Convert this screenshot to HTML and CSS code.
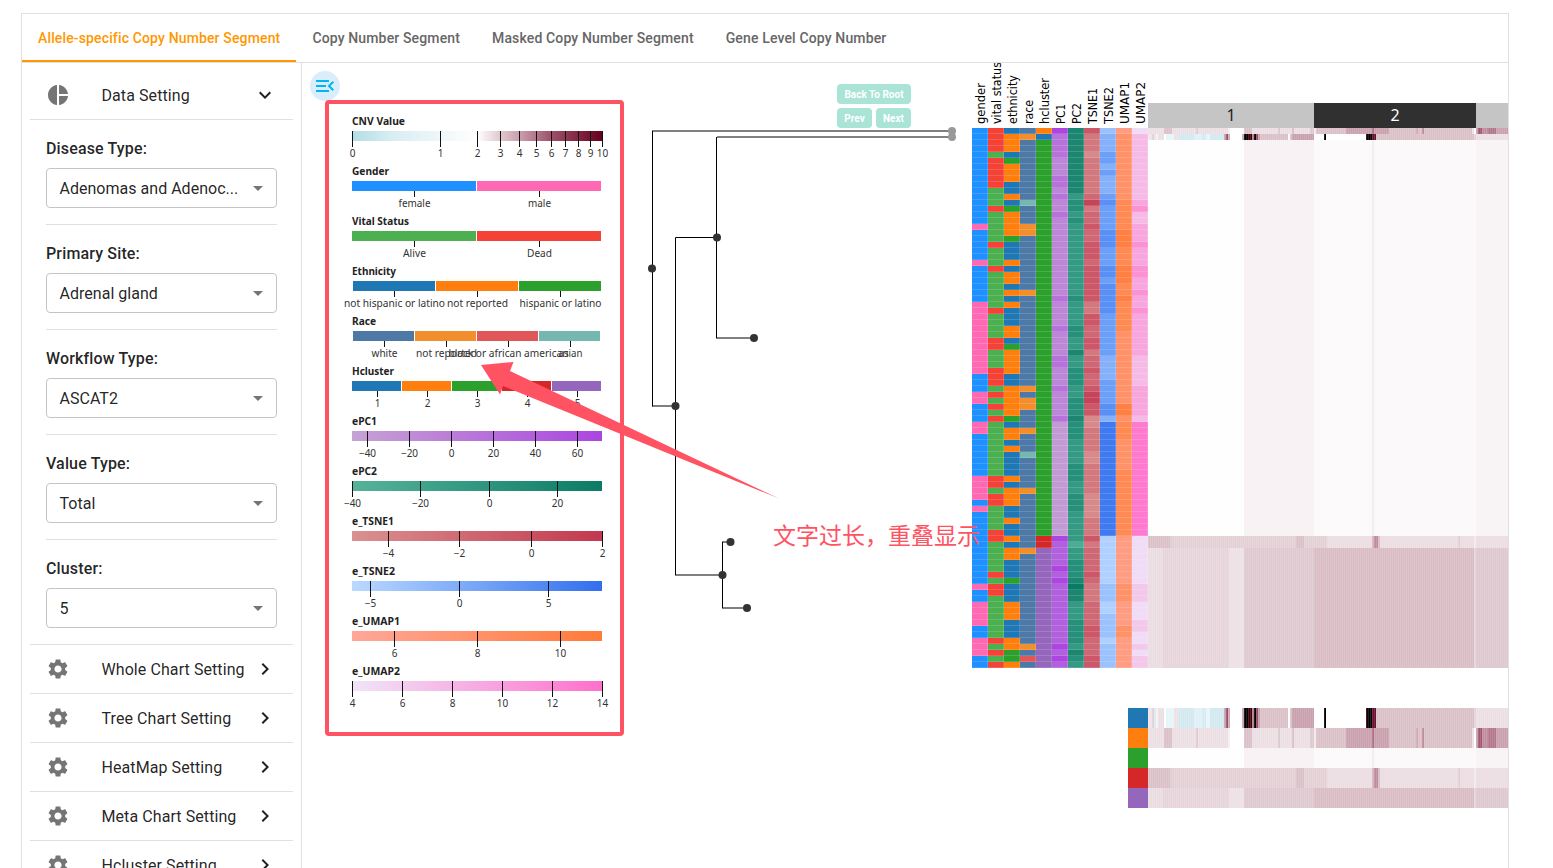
FILE: index.html
```html
<!DOCTYPE html>
<html lang="en">
<head>
<meta charset="utf-8">
<title>Copy Number Segment</title>
<link rel="stylesheet" href="styles.css">
</head>
<body>
<svg class="defs" width="0" height="0" aria-hidden="true">
  <symbol id="i-gear" viewBox="0 0 24 24"><path d="M19.14 12.94c.04-.3.06-.61.06-.94 0-.32-.02-.64-.07-.94l2.03-1.58c.18-.14.23-.41.12-.61l-1.92-3.32c-.12-.22-.37-.29-.59-.22l-2.39.96c-.5-.38-1.03-.7-1.62-.94l-.36-2.54c-.04-.24-.24-.41-.48-.41h-3.84c-.24 0-.43.17-.47.41l-.36 2.54c-.59.24-1.13.57-1.62.94l-2.39-.96c-.22-.08-.47 0-.59.22L2.74 8.87c-.12.21-.08.47.12.61l2.03 1.58c-.05.3-.09.63-.09.94s.02.64.07.94l-2.03 1.58c-.18.14-.23.41-.12.61l1.92 3.32c.12.22.37.29.59.22l2.39-.96c.5.38 1.03.7 1.62.94l.36 2.54c.05.24.24.41.48.41h3.84c.24 0 .44-.17.47-.41l.36-2.54c.59-.24 1.13-.56 1.62-.94l2.39.96c.22.08.47 0 .59-.22l1.92-3.32c.12-.22.07-.47-.12-.61l-2.01-1.58zM12 15.6c-1.98 0-3.6-1.62-3.6-3.6s1.62-3.6 3.6-3.6 3.6 1.62 3.6 3.6-1.62 3.6-3.6 3.6z"/></symbol>
  <symbol id="i-pie" viewBox="0 0 24 24"><path d="M11 2v20c-5.07-.5-9-4.79-9-10s3.93-9.5 9-10zm2.03 0v8.99H22c-.47-4.74-4.24-8.52-8.97-8.99zm0 11.01V22c4.74-.47 8.5-4.25 8.97-8.99h-8.97z"/></symbol>
  <symbol id="i-right" viewBox="0 0 24 24"><path d="M10 6 8.59 7.41 13.17 12l-4.58 4.59L10 18l6-6z"/></symbol>
  <symbol id="i-down" viewBox="0 0 24 24"><path d="M16.59 8.59 12 13.17 7.41 8.59 6 10l6 6 6-6z"/></symbol>
  <symbol id="i-drop" viewBox="0 0 24 24"><path d="m7 10 5 5 5-5z"/></symbol>
  <symbol id="i-menu" viewBox="0 0 24 24"><path d="M3 18h13v-2H3v2zM3 13h10v-2H3v2zm0-7v2h13V6H3zm18 9.59L17.42 12 21 8.41 19.59 7l-5 5 5 5L21 15.59z"/></symbol>
</svg>
<main class="panel">
  <nav class="tabs">
    <a class="tab tab-active">Allele-specific Copy Number Segment</a>
    <a class="tab">Copy Number Segment</a>
    <a class="tab">Masked Copy Number Segment</a>
    <a class="tab">Gene Level Copy Number</a>
  </nav>
  <div class="body">
    <aside class="sidebar">
      <div class="row"><svg class="icon"><use href="#i-pie"/></svg><span class="row-text">Data Setting</span><svg class="chev"><use href="#i-down"/></svg></div>
      <div class="fields">
        <div class="field"><label class="label">Disease Type:</label><div class="select"><span>Adenomas and Adenoc...</span><svg class="drop"><use href="#i-drop"/></svg></div></div>
        <div class="field"><label class="label">Primary Site:</label><div class="select"><span>Adrenal gland</span><svg class="drop"><use href="#i-drop"/></svg></div></div>
        <div class="field"><label class="label">Workflow Type:</label><div class="select"><span>ASCAT2</span><svg class="drop"><use href="#i-drop"/></svg></div></div>
        <div class="field"><label class="label">Value Type:</label><div class="select"><span>Total</span><svg class="drop"><use href="#i-drop"/></svg></div></div>
        <div class="field field-last"><label class="label">Cluster:</label><div class="select"><span>5</span><svg class="drop"><use href="#i-drop"/></svg></div></div>
      </div>
      <div class="row row-top"><svg class="icon"><use href="#i-gear"/></svg><span class="row-text">Whole Chart Setting</span><svg class="chev"><use href="#i-right"/></svg></div>
      <div class="row"><svg class="icon"><use href="#i-gear"/></svg><span class="row-text">Tree Chart Setting</span><svg class="chev"><use href="#i-right"/></svg></div>
      <div class="row"><svg class="icon"><use href="#i-gear"/></svg><span class="row-text">HeatMap Setting</span><svg class="chev"><use href="#i-right"/></svg></div>
      <div class="row"><svg class="icon"><use href="#i-gear"/></svg><span class="row-text">Meta Chart Setting</span><svg class="chev"><use href="#i-right"/></svg></div>
      <div class="row"><svg class="icon"><use href="#i-gear"/></svg><span class="row-text">Hcluster Setting</span><svg class="chev"><use href="#i-right"/></svg></div>
    </aside>
    <section class="stage">
      <svg id="chart" class="chart" viewBox="302 63 1206 805"></svg>
      <button class="toggle"><svg class="toggle-icon"><use href="#i-menu"/></svg></button>
      <div class="tree-nav">
        <button class="mini mini-wide">Back To Root</button>
        <button class="mini">Prev</button>
        <button class="mini">Next</button>
      </div>
      <svg class="notes" viewBox="302 63 1206 805">
        <rect x="327" y="102" width="295" height="632" rx="2" class="note-box"/>
        <path class="note-arrow" d="M481 365 L513.500 362 L510 371 L779 498.500 L503 386 L500 394.500 Z"/>
        <text x="773" y="543.500" class="note-text" textLength="207">文字过长，重叠显示</text>
      </svg>
    </section>
  </div>
</main>
<script src="chart.js"></script>
</body>
</html>
```
FILE: styles.css
```css
* { box-sizing: border-box; }
body { margin: 0; height: 868px; overflow: hidden; background: #fff; font-family: Roboto, "Noto Sans", sans-serif; color: rgba(0,0,0,.87); }
.defs { position: absolute; }
.panel { margin: 13px 44px 0 21px; width: 1488px; height: 855px; border: 1px solid #e0e0e0; border-bottom: 0; display: flex; flex-direction: column; overflow: hidden; }
.tabs { display: flex; height: 49px; flex: none; border-bottom: 1px solid #e0e0e0; }
.tab { padding: 0 16px; height: 48px; line-height: 48px; font-size: 14px; font-weight: 500; letter-spacing: .14px; color: #666; white-space: nowrap; }
.tab-active { color: #ff9800; border-bottom: 2px solid #ff9800; }
.body { display: flex; flex: 1; min-height: 0; }
.sidebar { width: 280px; flex: none; border-right: 1px solid #e0e0e0; padding: 8px 8px 0; overflow: hidden; }
.row { height: 49px; display: flex; align-items: center; padding: 0 16px; border-bottom: 1px solid #e0e0e0; }
.row-top { border-top: 1px solid #e0e0e0; height: 50px; }
.icon { width: 24px; height: 24px; fill: #757575; flex: none; }
.row-text { flex: 1; padding-left: 31.500px; font-size: 16px; letter-spacing: .08px; white-space: nowrap; }
.chev { width: 24px; height: 24px; flex: none; fill: #222; }
.fields { padding: 0 16px; }
.field { height: 105px; border-bottom: 1px solid #e0e0e0; padding-top: 16px; }
.field-last { height: 104px; border: 0; }
.label { display: block; height: 32px; line-height: 25px; font-size: 16px; font-weight: 500; letter-spacing: .15px; }
.select { height: 40px; border: 1px solid #c4c4c4; border-radius: 4px; display: flex; align-items: center; justify-content: space-between; padding: 0 6px 0 12.500px; font-size: 16px; letter-spacing: .02px; white-space: nowrap; }
.drop { width: 24px; height: 24px; fill: #757575; flex: none; }
.stage { position: relative; flex: none; width: 1206px; }
.chart, .notes { display: block; width: 1206px; height: 805px; }
.notes { position: absolute; left: 0; top: 0; pointer-events: none; }
.toggle { position: absolute; left: 8px; top: 8px; width: 30px; height: 30px; border: 0; border-radius: 50%; background: #daedfb; display: grid; place-items: center; padding: 0; z-index: 0; }
.toggle-icon { width: 24px; height: 24px; fill: #03b4f4; }
.tree-nav { position: absolute; left: 535px; top: 21px; width: 74px; display: flex; flex-wrap: wrap; gap: 4px; }
.mini { border: 0; height: 20px; padding: 0; flex: 1; border-radius: 4px; background: #a9e4d7; color: #fff; font: 700 10px Roboto, sans-serif; }
.mini-wide { flex: 0 0 100%; }
.note-box { fill: none; stroke: #ff5262; stroke-width: 4; }
.note-arrow { fill: #ff5262; }
.note-text { fill: #ff5262; font: 400 23px "Noto Sans CJK SC", sans-serif; }
.lg-title { font: 700 10px "Noto Sans", sans-serif; fill: #222; }
.lg-label { font: 10px "Noto Sans", sans-serif; fill: #333; text-anchor: middle; }
.link { fill: none; stroke: #000; }
.node { fill: #333; }
.node-leaf { fill: #999; }
.col-name { font: 12px "DejaVu Sans", sans-serif; fill: #000; }
.chrom { font: 16px "Noto Sans", sans-serif; text-anchor: middle; }
```
FILE: chart.js
```javascript
const NS = 'http://www.w3.org/2000/svg';
const chart = document.getElementById('chart');
function add(tag, attrs, text) {
  const el = document.createElementNS(NS, tag);
  for (const k in attrs) el.setAttribute(k, attrs[k]);
  if (text !== undefined) el.textContent = text;
  chart.appendChild(el);
  return el;
}
const rect = (x, y, w, h, fill) => add('rect', { x, y, width: w, height: h, fill, 'shape-rendering': 'crispEdges' });
const vline = (x, y1, y2) => rect(x, y1, 1, y2 - y1, '#111');

// Legends
function title(i, text, width) {
  add('text', { x: 352, y: 125 + i * 50, class: 'lg-title', textLength: width, lengthAdjust: 'spacingAndGlyphs' }, text);
}
function label(x, i, text, width) {
  const a = { x, y: 157 + i * 50, class: 'lg-label' };
  if (width) { a.textLength = width; a.lengthAdjust = 'spacingAndGlyphs'; }
  add('text', a, text);
}
function gradientLegend(i, name, width, stops, ticks) {
  title(i, name, width);
  const g = add('linearGradient', { id: 'grad' + i });
  stops.forEach(([o, c]) => {
    const s = document.createElementNS(NS, 'stop');
    s.setAttribute('offset', o); s.setAttribute('stop-color', c); g.appendChild(s);
  });
  rect(352, 131 + i * 50, 250, 10, `url(#grad${i})`);
  ticks.forEach(([x, t]) => { vline(x, 131 + i * 50, 147 + i * 50); label(x + .5, i, t); });
}
function bandLegend(i, name, width, x0, step, items) {
  title(i, name, width);
  items.forEach(([c, t, w], k) => {
    const x = Math.round(x0 + k * step), e = Math.round(x0 + (k + 1) * step) - 1;
    rect(x, 131 + i * 50, e - x, 10, c);
    const m = Math.round(x0 + (k + .5) * step - .5);
    vline(m, 141 + i * 50, 147 + i * 50);
    label(m + .5, i, t, w);
  });
}
gradientLegend(0, 'CNV Value', 53, [[0, '#b3dde6'], [.16, '#d8edf2'], [.35, '#eef7fa'], [.5, '#ffffff'], [.6, '#dec5cc'], [.67, '#c99fac'], [.8, '#9c5069'], [1, '#67001f']],
  [[352, 0], [440, 1], [477, 2], [500, 3], [519, 4], [536, 5], [551, 6], [565, 7], [578, 8], [590, 9], [602, 10]]);
bandLegend(1, 'Gender', 37, 352, 125, [['#1e90ff', 'female', 32], ['#ff69b4', 'male', 23]]);
bandLegend(2, 'Vital Status', 57, 352, 125, [['#4caf50', 'Alive', 23], ['#f44336', 'Dead', 25]]);
bandLegend(3, 'Ethnicity', 44, 353, 83, [['#1f77b4', 'not hispanic or latino', 101], ['#ff7f0e', 'not reported', 61], ['#2ca02c', 'hispanic or latino', 82]]);
bandLegend(4, 'Race', 24, 353, 62, [['#4e79a7', 'white', 26], ['#f28e2b', 'not reported', 61], ['#e15759', 'black or african american', 120], ['#76b7b2', 'asian', 24]]);
bandLegend(5, 'Hcluster', 42, 352, 50, [['#1f77b4', 1], ['#ff7f0e', 2], ['#2ca02c', 3], ['#d62728', 4], ['#9467bd', 5]]);
gradientLegend(6, 'ePC1', 25, [[0, '#c5a3d3'], [1, '#ab45e0']], [[367, '−40'], [409, '−20'], [451, 0], [493, 20], [535, 40], [577, 60]]);
gradientLegend(7, 'ePC2', 25, [[0, '#56b39a'], [1, '#0c7b65']], [[352, '−40'], [420, '−20'], [489, 0], [557, 20]]);
gradientLegend(8, 'e_TSNE1', 42, [[0, '#d99191'], [1, '#c3384f']], [[388, '−4'], [459, '−2'], [531, 0], [602, 2]]);
gradientLegend(9, 'e_TSNE2', 43, [[0, '#bbdaff'], [1, '#326fee']], [[370, '−5'], [459, 0], [548, 5]]);
gradientLegend(10, 'e_UMAP1', 48, [[0, '#ffa79a'], [1, '#ff7b38']], [[394, 6], [477, 8], [560, 10]]);
gradientLegend(11, 'e_UMAP2', 48, [[0, '#f0e5f8'], [1, '#ff70cb']], [[352, 4], [402, 6], [452, 8], [502, 10], [552, 12], [602, 14]]);

// Cluster tree
add('path', { class: 'link', d: 'M652.5 131V406.5M652 406H675.5M716.5 137V338M717 237.5H675.5V575M675 575H722.5M722.5 542V608M716 338H754M722 542H730M722 608H747' });
add('path', { class: 'link', d: 'M652 131H952M717 137H952' });
[[652, 268.5], [717, 237.5], [754, 338], [675.5, 406], [730.5, 542], [722.5, 575], [747, 608]].forEach(([cx, cy]) => add('circle', { cx, cy, r: 4, class: 'node' }));
[131, 137].forEach(cy => add('circle', { cx: 952, cy, r: 4, class: 'node-leaf' }));

// Meta columns: name, palette, run-length rows (90 in all), label length
const metas = [
  ['gender', { b: '#1e90ff', p: '#ff69b4' }, 'b16 p1 b5 p1 b6 p12 b3 p2 b3 p2 b7 p4 b1 p1 b12 p1 b2 p4 b2 p3 b2', 41],
  ['vital status', { r: '#f44336', g: '#4caf50' }, 'r4 g1 r5 g3 r1 g5 r1 g3 r1 g6 r1 g4 r2 g3 r3 g1 r1 g1 r1 g1 r1 g9 r2 g1 r2 g4 r2 g5 r1 g1 r2 g7 r1 g1 r1 g1 r1', 62],
  ['ethnicity', { b: '#1f77b4', o: '#ff7f0e', g: '#2ca02c' }, 'b1 o3 b1 g1 o3 b2 o1 b1 g1 o4 g1 b3 o1 b1 o2 b1 o1 b1 o1 b3 o2 b1 g1 o4 b2 o5 g1 b1 o2 b1 o1 b4 o1 b1 o3 b2 o1 b2 o1 b1 o2 b3 g1 b3 o3 b3 o2 g2 o1', 49],
  ['race', { n: '#4e79a7', o: '#f28e2b', t: '#76b7b2', r: '#e15759' }, 'n1 o1 n10 t1 n3 o2 n9 o1 n15 o1 n1 o2 n3 o1 n3 t1 n5 o1 n9 o1 n15 o1 n1 r1 n1', 24],
  ['hcluster', { o: '#ff7f0e', b: '#1f77b4', g: '#2ca02c', r: '#d62728', p: '#9467bd' }, 'o1 b1 g66 r2 p20', 46],
  ['PC1', { a: '#ad45e0', b: '#b160de', c: '#b873db', d: '#bd87d8', e: '#c39bd4' }, 'a1 c4 d3 c2 d1 c1 d2 c1 d13 c1 d4 c1 d4 c2 d3 c1 d4 c1 e19 a1 b4 a1 b1 a1 b10 a1 b1 a1 b1', 20],
  ['PC2', { a: '#0c7b65', b: '#1d8670', c: '#27907a', d: '#359a83', e: '#4cac94' }, 'b11 d1 c2 d1 c1 d12 c1 d4 c2 d2 b1 d2 c3 d2 c3 b1 c3 d4 c3 d2 c3 d4 d1 e1 d2 c3 b1 a1 b2 d3 c4 d1 b1 c1 d1', 21],
  ['TSNE1', { a: '#c64459', b: '#cb5768', c: '#cf6875', d: '#d27980', e: '#d68a8c' }, 'b1 d3 e1 d6 c1 a1 d1 c2 b1 c2 b3 c1 b5 b1 d2 b2 c2 b2 d1 c2 b1 c2 b1 a2 b2 e2 d4 e2 d5 e4 d3 b1 d1 c4 b1 c1 d3 c4 b2 c3 b2', 36],
  ['TSNE2', { a: '#3f7af0', b: '#5a90f5', c: '#6c9ff8', d: '#85b0fa', e: '#9cc2fd', f: '#b0d0ff' }, 'e1 d3 c2 d1 c1 d3 c1 b1 c4 b3 c3 b2 c1 b5 c4 c3 d4 c4 b2 d1 a19 f8 e3 f2 e4 f1 e4', 37],
  ['UMAP1', { a: '#ff8042', b: '#ff8a53', c: '#ff9268', d: '#ff9c82' }, 'd1 c11 b5 a3 b3 a3 b2 a1 b5 c12 a2 c1 b3 c5 b11 d8 c3 d4 c2 d5', 42],
  ['UMAP2', { a: '#ff7acf', b: '#fc91d4', c: '#f8a6de', d: '#f5bbe6', e: '#f2c8eb', f: '#f0dcf5' }, 'f1 d11 c1 b1 d2 c3 b1 c3 b2 c2 b1 c2 b1 c7 d5 c5 d1 a19 f8 e3 f3 e2 f2 e1 f1 e2', 42]
];
const runs = s => s.split(' ').map(r => [r[0], +r.slice(1)]);
metas.forEach(([name, pal, data, len], i) => {
  const x = 972 + i * 16;
  let row = 0;
  runs(data).forEach(([k, n]) => {
    rect(x, 128 + row * 6, 16, n * 6, pal[k]);
    row += n;
  });
  rect(x + 15, 128, 1, 540, 'rgba(255,255,255,.15)');
  add('text', { transform: `translate(${x + 12.5} 124) rotate(-90)`, class: 'col-name', textLength: len, lengthAdjust: 'spacingAndGlyphs' }, name);
});
for (let r = 0; r < 90; r++) rect(972, 133 + r * 6, 176, 1, 'rgba(255,255,255,.15)');

// Chromosome headers
[[1148, 166, '#c5c5c5', '1', '#222'], [1314, 162, '#303030', '2', '#fff'], [1476, 32, '#c5c5c5', '', '#222']].forEach(([x, w, c, t, f]) => {
  rect(x, 103, w, 25, c);
  if (t) add('text', { x: x + w / 2, y: 121, class: 'chrom', fill: f }, t);
});

// Segment profiles: [end offset, colour]
const profiles = [
  [[4, '#f0e4e8'], [6, '#e4d0d6'], [8, '#d6ecf3'], [10, '#f7f0f2'], [16, '#ecdfe4'], [18, '#fff'], [26, '#e6f5f8'], [30, '#f0e0e4'], [46, '#d2e9f0'], [54, '#e0f0f7'], [58, '#d6ebf1'], [62, '#e8f4f9'], [76, '#d2e9f0'], [78, '#c79fad'], [80, '#9b5068'], [82, '#cfa9b4'], [94, '#fff'], [96, '#c9a6b1'], [100, '#000'], [104, '#400008'], [106, '#b08090'], [108, '#000'], [110, '#954a62'], [112, '#c8a0ae'], [140, '#dac1c8'], [142, '#fff'], [144, '#dac1c8'], [166, '#c9a0ad'], [176, '#fff'], [178, '#000'], [218, '#fff'], [220, '#180004'], [224, '#000'], [228, '#6b0f32'], [326, '#dac1c8'], [328, '#e4d3d9'], [360, '#ecdfe4']],
  [[16, '#ecdfe4'], [24, '#dac1c8'], [48, '#ecdfe4'], [50, '#dfcbd1'], [80, '#ecdfe4'], [82, '#f5eff1'], [96, '#fff'], [104, '#dac1c8'], [130, '#ecdfe4'], [132, '#dcc9d0'], [144, '#ecdfe4'], [146, '#dac1c8'], [162, '#ecdfe4'], [166, '#dcc9d0'], [168, '#f2e9ec'], [198, '#dac1c8'], [224, '#c9a0ad'], [226, '#b07084'], [241, '#c9a0ad'], [268, '#dac1c8'], [270, '#cdaab6'], [274, '#dac1c8'], [276, '#bf8c9c'], [324, '#dac1c8'], [326, '#ecdfe4'], [328, '#fff'], [330, '#c9a0ad'], [334, '#a05872'], [340, '#bf8c9c'], [348, '#b2768b'], [360, '#c9a0ad']],
  [[96, '#fefefe'], [166, '#f7f1f3'], [224, '#fbf9fa'], [226, '#f3ecee'], [328, '#fbf8f9'], [360, '#f8f4f6']],
  [[22, '#dac1c8'], [25, '#e0cdd3'], [148, '#e3d0d5'], [156, '#dac1c8'], [179, '#e3d0d5'], [224, '#ebdde2'], [226, '#d4b4be'], [230, '#bf8c9c'], [232, '#d8bec7'], [310, '#ebdde2'], [312, '#e0d0d5'], [326, '#ebdde2'], [328, '#f2e9ec'], [360, '#ebdde2']],
  [[15, '#eaddE1'], [81, '#e6d4da'], [96, '#ede1e5'], [166, '#dec9d0'], [326, '#d9bcc4'], [328, '#e6d5da'], [360, '#ddc8cf']]
];
function band(p, y, h) {
  let x = 0;
  profiles[p].forEach(([end, c]) => { rect(1148 + x, y, end - x, h, c); x = end; });
}
const stripe = add('pattern', { id: 'stripe', width: 2, height: 2, patternUnits: 'userSpaceOnUse' });
const line = document.createElementNS(NS, 'rect');
line.setAttribute('width', 1); line.setAttribute('height', 2); line.setAttribute('fill', 'rgba(255,255,255,.13)');
stripe.appendChild(line);
band(1, 128, 6); band(0, 134, 6); band(2, 140, 396); band(3, 536, 12); band(4, 548, 120);
['#1f77b4', '#ff7f0e', '#2ca02c', '#d62728', '#9467bd'].forEach((c, i) => {
  rect(1128, 708 + i * 20, 20, 20, c);
  band(i, 708 + i * 20, 20);
});
rect(1148, 128, 360, 540, 'url(#stripe)');
rect(1148, 708, 360, 100, 'url(#stripe)');
```
